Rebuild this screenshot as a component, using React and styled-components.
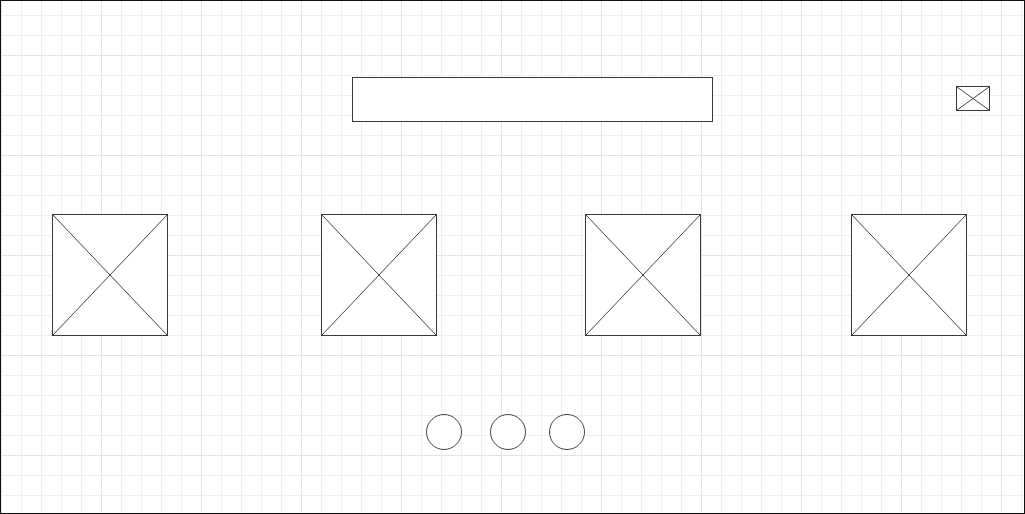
import React from "react";
import styled, { createGlobalStyle } from "styled-components";

const Global = createGlobalStyle`
  html, body { margin: 0; padding: 0; background: #fff; }
  body { font-family: "Liberation Sans", Arial, sans-serif; }
`;

const Frame = styled.div`
  box-sizing: border-box;
  width: 1025px;
  height: 514px;
  border: 1px solid #111;
  background-color: #fff;
  background-image:
    linear-gradient(to right, #e3e3e3 1px, transparent 1px),
    linear-gradient(to bottom, #e3e3e3 1px, transparent 1px),
    linear-gradient(to right, #eeeeee 1px, transparent 1px),
    linear-gradient(to bottom, #eeeeee 1px, transparent 1px);
  background-size: 100px 100px, 100px 100px, 20px 20px, 20px 20px;
  background-position: 0 0, 0 54px, 0 0, 0 14px;
  display: flex;
  flex-direction: column;
  overflow: hidden;
`;

const Header = styled.div`
  display: flex;
  align-items: flex-start;
  padding: 76px 0 0 351px;
`;

const SearchBar = styled.div`
  box-sizing: border-box;
  width: 361px;
  height: 45px;
  border: 1px solid #3a3a3a;
  background: #fff;
`;

const IconBox = styled.div`
  box-sizing: border-box;
  width: 34px;
  height: 25px;
  margin: 9px 0 0 243px;
  border: 1px solid #3a3a3a;
  background: #fff;
  display: flex;
`;

const Gallery = styled.div`
  display: flex;
  margin-top: 92px;
`;

const ImageBox = styled.div`
  box-sizing: border-box;
  width: 116px;
  height: 122px;
  margin-left: ${(p) => p.$offset}px;
  border: 1px solid #3a3a3a;
  background: #fff;
  display: flex;
`;

const Cross = styled.svg`
  width: 100%;
  height: 100%;
  display: block;
`;

const Dots = styled.div`
  display: flex;
  margin-top: 78px;
`;

const Dot = styled.div`
  box-sizing: border-box;
  width: 36px;
  height: 36px;
  margin-left: ${(p) => p.$offset}px;
  border: 1px solid #444;
  border-radius: 50%;
  background: #fff;
`;

const XMark = () => (
  <Cross viewBox="0 0 100 100" preserveAspectRatio="none">
    <line x1="0" y1="0" x2="100" y2="100" stroke="#444" strokeWidth="1" vectorEffect="non-scaling-stroke" />
    <line x1="100" y1="0" x2="0" y2="100" stroke="#444" strokeWidth="1" vectorEffect="non-scaling-stroke" />
  </Cross>
);

export default function App() {
  const boxes = [51, 153, 148, 150];
  const dots = [425, 28, 23];
  return (
    <>
      <Global />
      <Frame>
        <Header>
          <SearchBar />
          <IconBox>
            <XMark />
          </IconBox>
        </Header>
        <Gallery>
          {boxes.map((o, i) => (
            <ImageBox key={i} $offset={o}>
              <XMark />
            </ImageBox>
          ))}
        </Gallery>
        <Dots>
          {dots.map((o, i) => (
            <Dot key={i} $offset={o} />
          ))}
        </Dots>
      </Frame>
    </>
  );
}
